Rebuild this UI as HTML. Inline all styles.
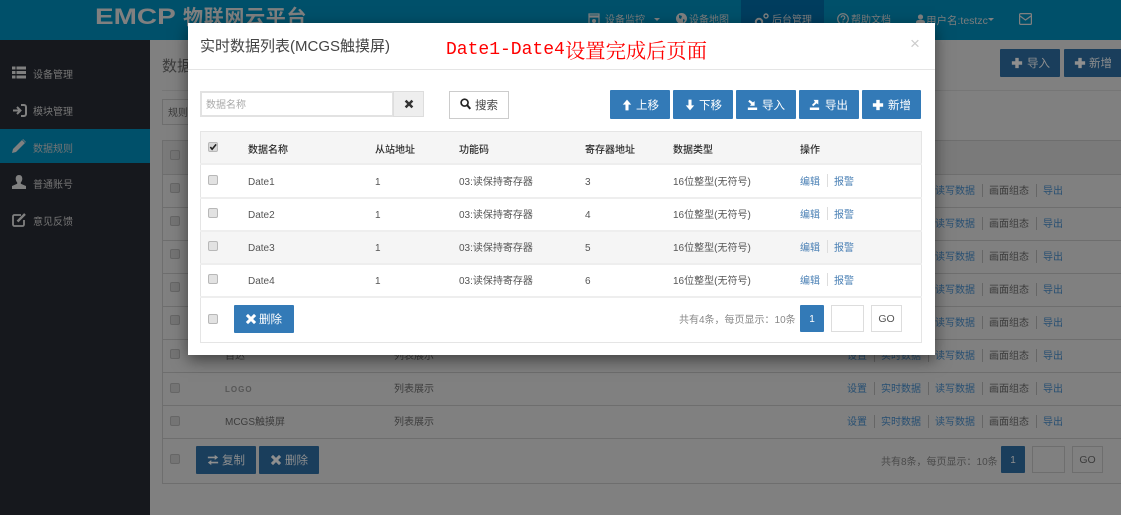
<!DOCTYPE html>
<html lang="zh"><head><meta charset="utf-8"><title>实时数据列表</title>
<style>
html,body{margin:0;padding:0;width:1121px;height:515px;overflow:hidden;background:#808080}
body{font:10px/16px "Liberation Sans","Noto Sans CJK SC",sans-serif;color:#555;position:relative}
div,span,svg,a{position:absolute;box-sizing:border-box}
span{white-space:nowrap;transform:translateY(2px)}
.b{background:#337ab7;color:#fff;font-size:11.5px;height:28px;border-radius:1px}
.b svg{top:8px;left:11px}
.b span{top:6px;left:26px;transform:translateY(1px)}
.k{background:#1a3e5c;color:#8f8f8f}
.n{color:#7d7d7d}
.m{color:#757575}
.cb{width:10px;height:10px;border:1px solid #b8b8b8;border-radius:2px;background:#e2e2e2}
.cd{width:10px;height:10px;border:1px solid #666;border-radius:2px;background:#747474}
.l{color:#4a80b5}
.dl{color:#274f72}
.dt{color:#3c3c3c}
.s{width:1px;height:13px;background:#ddd}
.ds{width:1px;height:13px;background:#666}
.hl{height:1px;background:#6e6e6e;left:162px;right:0}
.hm{height:2px;background:#eeeeee;left:200px;width:722px}
.h{color:#2c2c2c;font-weight:500}
</style></head><body>

<!-- top bar -->
<div style="left:0;top:0;width:1121px;height:40px;background:#00506a"></div>
<span style="left:95px;top:3px;font:bold 22px/28px 'Liberation Sans',sans-serif;color:#808080;transform-origin:0 50%;transform:scaleX(1.27)">EMCP</span>
<span style="left:183px;top:5px;font-size:20px;line-height:26px;font-weight:bold;color:#808080;letter-spacing:.7px;transform:none">物联网云平台</span>
<div style="left:741px;top:0;width:83px;height:40px;background:#003d5e"></div>
<svg style="left:588px;top:13px" width="12" height="13" viewBox="0 0 12 13"><path d="M1 1h10v2H1zM1 4h10v8H1z" fill="none" stroke="#808080" stroke-width="1.2"/><circle cx="6" cy="8" r="2" fill="#808080"/></svg>
<span class="n" style="left:605px;top:11px">设备监控</span><div style="left:654px;top:18px;border:3.5px solid transparent;border-top-color:#808080"></div>
<svg style="left:676px;top:13px" width="11" height="11" viewBox="0 0 11 11"><circle cx="5.5" cy="5.5" r="5.5" fill="#808080"/><path d="M3 2l3 1-1 3-2-1zM7 6l2 1-2 3z" fill="#00506a"/></svg>
<span class="n" style="left:689px;top:11px">设备地图</span>
<svg style="left:754px;top:12px" width="15" height="15" viewBox="0 0 15 15"><circle cx="5" cy="10" r="3.200" fill="none" stroke="#808080" stroke-width="2"/><circle cx="12" cy="4" r="2" fill="none" stroke="#808080" stroke-width="1.400"/></svg>
<span class="n" style="left:772px;top:11px">后台管理</span>
<svg style="left:837px;top:13px" width="12" height="12" viewBox="0 0 12 12"><circle cx="6" cy="6" r="5.300" fill="none" stroke="#808080" stroke-width="1.200"/><path d="M4.200 4.600a1.800 1.800 0 1 1 2.600 1.600c-.6.300-.8.600-.8 1.200M6 8.400v1.200" fill="none" stroke="#808080" stroke-width="1.100"/></svg>
<span class="n" style="left:851px;top:11px">帮助文档</span>
<svg style="left:916px;top:14px" width="9" height="11" viewBox="0 0 9 11"><circle cx="4.500" cy="3" r="2.600" fill="#808080"/><path d="M0 11V8.500Q0 6 3 6h3q3 0 3 2.500V11z" fill="#808080"/></svg>
<span class="n" style="left:926px;top:11px;font-size:10.5px">用户名:testzc</span><div style="left:988px;top:18px;border:3.5px solid transparent;border-top-color:#808080"></div>
<svg style="left:1019px;top:13px" width="13" height="12" viewBox="0 0 13 12"><rect x=".6" y=".6" width="11.800" height="10.800" rx="1" fill="none" stroke="#808080" stroke-width="1.200"/><path d="M1 3l5.500 4 5.500-4" fill="none" stroke="#808080" stroke-width="1.200"/></svg>

<!-- sidebar -->
<div style="left:0;top:40px;width:150px;height:475px;background:#16181d"></div>
<div style="left:0;top:129px;width:150px;height:34px;background:#00506a"></div>
<svg style="left:12px;top:66px" width="14" height="13" viewBox="0 0 14 12" fill="#808080"><path d="M0 0h3.500v3H0zM4.500 0H14v3H4.500zM0 4.500h3.500v3H0zM4.500 4.500H14v3H4.500zM0 9h3.500v3H0zM4.500 9H14v3H4.500z"/></svg>
<span class="m" style="left:33px;top:66px">设备管理</span>
<svg style="left:12px;top:104px" width="15" height="13" viewBox="0 0 15 13" fill="none" stroke="#808080" stroke-width="2"><path d="M1 6.500h6M5 3l3.500 3.500L5 10"/><path d="M9 1h3a2 2 0 0 1 2 2v7a2 2 0 0 1-2 2H9"/></svg>
<span class="m" style="left:33px;top:103px">模块管理</span>
<svg style="left:12px;top:139px" width="14" height="14" viewBox="0 0 14 14" fill="#808080"><path d="M0 14l1-4L10 1l3 3-9 9zM11 0l3 3-.5.500-3-3z"/></svg>
<span class="m" style="left:33px;top:140px">数据规则</span>
<svg style="left:12px;top:175px" width="14" height="14" viewBox="0 0 14 14" fill="#808080"><path d="M7 0c2.200 0 3.300 1.500 3.300 3.800 0 1.500-.7 3-1.500 3.700v1.200L14 11v3H0v-3l5.200-2.300V7.500C4.400 6.800 3.700 5.300 3.700 3.800 3.700 1.500 4.800 0 7 0z"/></svg>
<span class="m" style="left:33px;top:176px">普通账号</span>
<svg style="left:12px;top:213px" width="14" height="14" viewBox="0 0 14 14" fill="none" stroke="#808080" stroke-width="1.800"><path d="M9 2H2.500A1.500 1.500 0 0 0 1 3.500v8A1.500 1.500 0 0 0 2.500 13h8a1.500 1.500 0 0 0 1.500-1.500V7"/><path d="M5.500 8.500L13 1" stroke-width="2.400"/></svg>
<span class="m" style="left:33px;top:213px">意见反馈</span>

<!-- main background -->
<span class="dt" style="left:162px;top:54px;font-size:15px;line-height:24px;transform:translateY(1px)">数据规则</span>
<div class="hl" style="top:90px;background:#767676"></div>
<div style="left:162px;top:99px;width:60px;height:26px;border:1px solid #6e6e6e"></div><span class="dt" style="left:168px;top:104px">规则</span>
<div class="b k" style="left:1000px;top:49px;width:60px"><svg style="left:11px" width="12" height="12" viewBox="0 0 14 14" fill="#8f8f8f"><path d="M5 1h4v4h4v4H9v4H5V9H1V5h4z"/></svg><span style="left:27px">导入</span></div>
<div class="b k" style="left:1064px;top:49px;width:60px"><svg style="left:10px" width="12" height="12" viewBox="0 0 14 14" fill="#8f8f8f"><path d="M5 1h4v4h4v4H9v4H5V9H1V5h4z"/></svg><span style="left:25px">新增</span></div>

<div style="left:162px;top:140px;right:0;height:34px;background:#7a7a7a"></div>
<div style="left:162px;top:140px;width:1px;height:343px;background:#6e6e6e"></div>
<div class="hl" style="top:140px"></div><div class="hl" style="top:174px"></div><div class="hl" style="top:207px"></div><div class="hl" style="top:240px"></div><div class="hl" style="top:273px"></div><div class="hl" style="top:306px"></div><div class="hl" style="top:339px"></div><div class="hl" style="top:372px"></div><div class="hl" style="top:405px"></div><div class="hl" style="top:438px"></div><div class="hl" style="top:483px"></div>
<div class="cd" style="left:170px;top:150px"></div><div class="cd" style="left:170px;top:183px"></div><div class="cd" style="left:170px;top:216px"></div><div class="cd" style="left:170px;top:249px"></div><div class="cd" style="left:170px;top:282px"></div><div class="cd" style="left:170px;top:315px"></div><div class="cd" style="left:170px;top:349px"></div><div class="cd" style="left:170px;top:383px"></div><div class="cd" style="left:170px;top:416px"></div><div class="cd" style="left:170px;top:454px"></div>

<span class="dt" style="left:225px;top:347px">百达</span><span class="dt" style="left:394px;top:347px">列表展示</span>
<span style="left:225px;top:380px;font-weight:bold;font-size:8px;letter-spacing:1px;color:#565656">LOGO</span><span class="dt" style="left:394px;top:380px">列表展示</span>
<span class="dt" style="left:225px;top:413px">MCGS触摸屏</span><span class="dt" style="left:394px;top:413px">列表展示</span>

<span class="dl" style="left:935px;top:182px">读写数据</span><span class="dt" style="left:989px;top:182px">画面组态</span><span class="dl" style="left:1043px;top:182px">导出</span><div class="ds" style="left:982px;top:184px"></div><div class="ds" style="left:1036px;top:184px"></div>
<span class="dl" style="left:935px;top:215px">读写数据</span><span class="dt" style="left:989px;top:215px">画面组态</span><span class="dl" style="left:1043px;top:215px">导出</span><div class="ds" style="left:982px;top:217px"></div><div class="ds" style="left:1036px;top:217px"></div>
<span class="dl" style="left:935px;top:248px">读写数据</span><span class="dt" style="left:989px;top:248px">画面组态</span><span class="dl" style="left:1043px;top:248px">导出</span><div class="ds" style="left:982px;top:250px"></div><div class="ds" style="left:1036px;top:250px"></div>
<span class="dl" style="left:935px;top:281px">读写数据</span><span class="dt" style="left:989px;top:281px">画面组态</span><span class="dl" style="left:1043px;top:281px">导出</span><div class="ds" style="left:982px;top:283px"></div><div class="ds" style="left:1036px;top:283px"></div>
<span class="dl" style="left:935px;top:314px">读写数据</span><span class="dt" style="left:989px;top:314px">画面组态</span><span class="dl" style="left:1043px;top:314px">导出</span><div class="ds" style="left:982px;top:316px"></div><div class="ds" style="left:1036px;top:316px"></div>
<span class="dl" style="left:847px;top:347px">设置</span><span class="dl" style="left:881px;top:347px">实时数据</span><span class="dl" style="left:935px;top:347px">读写数据</span><span class="dt" style="left:989px;top:347px">画面组态</span><span class="dl" style="left:1043px;top:347px">导出</span><div class="ds" style="left:874px;top:349px"></div><div class="ds" style="left:928px;top:349px"></div><div class="ds" style="left:982px;top:349px"></div><div class="ds" style="left:1036px;top:349px"></div>
<span class="dl" style="left:847px;top:380px">设置</span><span class="dl" style="left:881px;top:380px">实时数据</span><span class="dl" style="left:935px;top:380px">读写数据</span><span class="dt" style="left:989px;top:380px">画面组态</span><span class="dl" style="left:1043px;top:380px">导出</span><div class="ds" style="left:874px;top:382px"></div><div class="ds" style="left:928px;top:382px"></div><div class="ds" style="left:982px;top:382px"></div><div class="ds" style="left:1036px;top:382px"></div>
<span class="dl" style="left:847px;top:413px">设置</span><span class="dl" style="left:881px;top:413px">实时数据</span><span class="dl" style="left:935px;top:413px">读写数据</span><span class="dt" style="left:989px;top:413px">画面组态</span><span class="dl" style="left:1043px;top:413px">导出</span><div class="ds" style="left:874px;top:415px"></div><div class="ds" style="left:928px;top:415px"></div><div class="ds" style="left:982px;top:415px"></div><div class="ds" style="left:1036px;top:415px"></div>

<div class="b k" style="left:196px;top:446px;width:60px"><svg width="12" height="12" viewBox="0 0 14 14" fill="#8f8f8f"><path d="M1 3h8V1l4 3-4 3V5H1zM13 9H5V7l-4 3 4 3v-2h8z"/></svg><span>复制</span></div>
<div class="b k" style="left:259px;top:446px;width:60px"><svg width="12" height="12" viewBox="0 0 14 14" fill="#8f8f8f"><path d="M3.500 1L7 4.500 10.500 1 13 3.500 9.500 7 13 10.500 10.500 13 7 9.500 3.500 13 1 10.500 4.500 7 1 3.500z"/></svg><span>删除</span></div>
<span style="left:881px;top:453px;color:#4a4a4a">共有8条，每页显示：10条</span>
<div class="b k" style="left:1001px;top:446px;width:24px;height:27px;text-align:center;line-height:29px;font-size:10px">1</div>
<div style="left:1032px;top:446px;width:33px;height:27px;border:1px solid #6e6e6e"></div>
<div class="dt" style="left:1072px;top:446px;width:31px;height:27px;border:1px solid #6e6e6e;text-align:center;line-height:27px;font-size:10.5px">GO</div>

<!-- modal -->
<div style="left:188px;top:23px;width:747px;height:332px;background:#fff;box-shadow:0 5px 15px rgba(0,0,0,.5)"></div>
<span style="left:200px;top:35px;font-size:15px;line-height:22px;color:#444;transform:translateY(1px)">实时数据列表(MCGS触摸屏)</span>
<span style="left:446px;top:37px;font:18px/26px 'Liberation Mono',monospace;color:#f00;transform:none">Date1-Date4</span>
<span style="left:565px;top:37px;font:20.300px/26px 'Noto Serif CJK SC',serif;color:#f00;transform:none">设置完成后页面</span>
<span style="left:910px;top:33px;font:17px/22px 'Liberation Sans',sans-serif;color:#ccc;transform:none">×</span>
<div style="left:188px;top:69px;width:747px;height:1px;background:#e5e5e5"></div>

<div style="left:200px;top:91px;width:194px;height:26px;border:2px solid #e2e2e2;background:#fff"></div>
<span style="left:206px;top:96px;color:#aaa">数据名称</span>
<div style="left:393px;top:91px;width:31px;height:26px;background:#eee;border:1px solid #ddd"></div>
<svg style="left:404px;top:99px" width="10" height="10" viewBox="0 0 14 14" fill="#333"><path d="M3.500 1L7 4.500 10.500 1 13 3.500 9.500 7 13 10.500 10.500 13 7 9.500 3.500 13 1 10.500 4.500 7 1 3.500z"/></svg>
<div style="left:449px;top:91px;width:60px;height:28px;border:1px solid #ccc;background:#fff"></div>
<svg style="left:460px;top:98px" width="11" height="12" viewBox="0 0 12 13" fill="none" stroke="#222"><circle cx="5" cy="5" r="3.800" stroke-width="1.800"/><path d="M8 8l3.200 3.800" stroke-width="2.200"/></svg>
<span style="left:475px;top:97px;color:#444;font-size:11.5px;transform:translateY(1px)">搜索</span>

<div class="b" style="left:610px;top:90px;width:60px;height:29px"><svg style="left:12px;top:9px" width="10" height="12" viewBox="0 0 13 14" fill="#fff"><path d="M6.500 0l5.500 6.500H8.500V14h-4V6.500H1z"/></svg><span style="left:26px;top:7px">上移</span></div>
<div class="b" style="left:673px;top:90px;width:60px;height:29px"><svg style="left:12px;top:9px" width="10" height="12" viewBox="0 0 13 14" fill="#fff"><path d="M6.500 14L1 7.500h3.500V0h4v7.500H12z"/></svg><span style="left:26px;top:7px">下移</span></div>
<div class="b" style="left:736px;top:90px;width:60px;height:29px"><svg style="left:11px;top:9px" width="11" height="11" viewBox="0 0 13 13" fill="#fff"><path d="M1 10h11v3H1zM3 1l4 3 2-1.500V8H3.500l1.500-2L1.500 3z"/></svg><span style="left:26px;top:7px">导入</span></div>
<div class="b" style="left:799px;top:90px;width:60px;height:29px"><svg style="left:10px;top:9px" width="11" height="11" viewBox="0 0 13 13" fill="#fff"><path d="M1 10h11v3H1zM11 1v5.500L9 5 5 8.500 3.500 7l3.500-3.500L5.500 1z"/></svg><span style="left:26px;top:7px">导出</span></div>
<div class="b" style="left:862px;top:90px;width:59px;height:29px"><svg style="left:10px;top:9px" width="12" height="12" viewBox="0 0 14 14" fill="#fff"><path d="M5 1h4v4h4v4H9v4H5V9H1V5h4z"/></svg><span style="left:26px;top:7px">新增</span></div>

<!-- modal table -->
<div style="left:200px;top:131px;width:722px;height:212px;border:1px solid #e5e5e5"></div>
<div style="left:201px;top:132px;width:720px;height:31px;background:#f5f5f5"></div>
<div style="left:201px;top:231px;width:720px;height:32px;background:#f5f5f5"></div>
<div class="hm" style="top:163px"></div><div class="hm" style="top:197px"></div><div class="hm" style="top:230px"></div><div class="hm" style="top:263px"></div><div class="hm" style="top:296px"></div>

<div class="cb" style="left:208px;top:142px;background:#d8d8d8"></div>
<svg style="left:209px;top:143px" width="8" height="8" viewBox="0 0 9 9"><path d="M1.500 4.500L3.500 7 8 1.500" fill="none" stroke="#222" stroke-width="1.800"/></svg>
<span class="h" style="left:248px;top:141px">数据名称</span><span class="h" style="left:375px;top:141px">从站地址</span><span class="h" style="left:459px;top:141px">功能码</span><span class="h" style="left:585px;top:141px">寄存器地址</span><span class="h" style="left:673px;top:141px">数据类型</span><span class="h" style="left:800px;top:141px">操作</span>

<div class="cb" style="left:208px;top:175px"></div><span style="left:248px;top:173px">Date1</span><span style="left:375px;top:173px">1</span><span style="left:459px;top:173px">03:读保持寄存器</span><span style="left:585px;top:173px">3</span><span style="left:673px;top:173px">16位整型(无符号)</span><span class="l" style="left:800px;top:173px">编辑</span><div class="s" style="left:827px;top:174px"></div><span class="l" style="left:834px;top:173px">报警</span>
<div class="cb" style="left:208px;top:208px"></div><span style="left:248px;top:206px">Date2</span><span style="left:375px;top:206px">1</span><span style="left:459px;top:206px">03:读保持寄存器</span><span style="left:585px;top:206px">4</span><span style="left:673px;top:206px">16位整型(无符号)</span><span class="l" style="left:800px;top:206px">编辑</span><div class="s" style="left:827px;top:207px"></div><span class="l" style="left:834px;top:206px">报警</span>
<div class="cb" style="left:208px;top:241px"></div><span style="left:248px;top:239px">Date3</span><span style="left:375px;top:239px">1</span><span style="left:459px;top:239px">03:读保持寄存器</span><span style="left:585px;top:239px">5</span><span style="left:673px;top:239px">16位整型(无符号)</span><span class="l" style="left:800px;top:239px">编辑</span><div class="s" style="left:827px;top:240px"></div><span class="l" style="left:834px;top:239px">报警</span>
<div class="cb" style="left:208px;top:274px"></div><span style="left:248px;top:272px">Date4</span><span style="left:375px;top:272px">1</span><span style="left:459px;top:272px">03:读保持寄存器</span><span style="left:585px;top:272px">6</span><span style="left:673px;top:272px">16位整型(无符号)</span><span class="l" style="left:800px;top:272px">编辑</span><div class="s" style="left:827px;top:273px"></div><span class="l" style="left:834px;top:272px">报警</span>

<div class="cb" style="left:208px;top:314px"></div>
<div class="b" style="left:234px;top:305px;width:60px"><svg width="12" height="12" viewBox="0 0 14 14" fill="#fff"><path d="M3.500 1L7 4.500 10.500 1 13 3.500 9.500 7 13 10.500 10.500 13 7 9.500 3.500 13 1 10.500 4.500 7 1 3.500z"/></svg><span style="left:25px">删除</span></div>
<span style="left:679px;top:311px;color:#888">共有4条，每页显示：10条</span>
<div class="b" style="left:800px;top:305px;width:24px;height:27px;text-align:center;line-height:29px;font-size:10px">1</div>
<div style="left:831px;top:305px;width:33px;height:27px;border:1px solid #ddd"></div>
<div style="left:871px;top:305px;width:31px;height:27px;border:1px solid #ddd;text-align:center;line-height:27px;font-size:10.5px">GO</div>
</body></html>
